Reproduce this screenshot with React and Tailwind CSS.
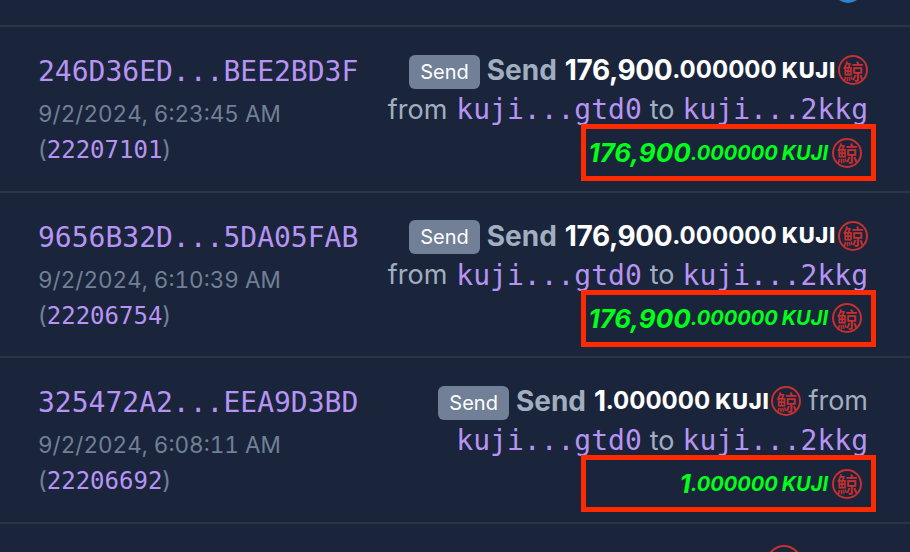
import React from 'react';

const rows = [
    { hash: '246D36ED...BEE2BD3F', date: '9/2/2024, 6:23:45 AM', height: '22207101', whole: '176,900', big: true },
    { hash: '9656B32D...5DA05FAB', date: '9/2/2024, 6:10:39 AM', height: '22206754', whole: '176,900', big: true },
    { hash: '325472A2...EEA9D3BD', date: '9/2/2024, 6:08:11 AM', height: '22206692', whole: '1', big: false },
];

const mono = 'font-["DejaVu_Sans_Mono",monospace] text-[28px] tracking-[0] text-[#b794f4]';

const Seal = ({ className = '' }) => (
    <span
        className={`inline-flex h-[30px] w-[30px] shrink-0 items-center justify-center rounded-full border-2 border-[#c53030] font-["Noto_Sans_CJK_SC",sans-serif] text-[21px] leading-none font-medium not-italic text-[#c53030] ${className}`}
    >
        鯨
    </span>
);

const Amount = ({ whole }) => (
    <span className="inline-flex items-center text-white">
        <span className="text-[28px] font-bold tracking-[-0.4px]">{whole}</span>
        <span className="text-[24px] font-bold">.000000</span>
        <span className="ml-[5px] text-[22px] font-extrabold tracking-[0.7px]">KUJI</span>
        <Seal className="ml-[2px]" />
    </span>
);

const Row = ({ hash, date, height, whole, big }) => (
    <div className="flex h-[165.5px] justify-between border-b-2 border-[#2a3548] pr-[42px] pl-[38px]">
        <div className="flex flex-col pt-[21px]">
            <div className={`${mono} h-[48px] leading-[48px]`}>{hash}</div>
            <div className="h-[36px] text-[22.5px] leading-[36px] text-[#718096] tabular-nums">{date}</div>
            <div className="h-[36px] text-[24px] leading-[36px] text-[#718096]">
                (<span className="font-['DejaVu_Sans_Mono',monospace] text-[#b794f4]">{height}</span>)
            </div>
        </div>
        <div className="flex flex-col items-end pt-[23px]">
            <div className="flex h-[40px] items-center">
                <span className="mt-[3px] mr-[7px] flex h-[34px] items-center rounded-[6px] bg-[#718096] px-[11px] text-[20px] text-white">Send</span>
                <span className="mr-[8px] text-[28px] font-bold text-[#a0aec0]">Send</span>
                <Amount whole={whole} />
                {!big && <span className="ml-[7px] text-[27px] text-[#a0aec0]">from</span>}
            </div>
            <div className="flex h-[40px] items-center text-[27px] text-[#a0aec0]">
                {big && <span className="mr-[9px]">from</span>}
                <span className={mono}>kuji...gtd0</span>
                <span className="mx-[8px]">to</span>
                <span className={mono}>kuji...2kkg</span>
            </div>
            <div className="-mt-[6px] -mr-[8px] flex h-[57px] w-[295px] items-center justify-end border-[5px] border-[#ff2a00] pr-[9px] italic text-[#00ff19]">
                <span className="text-[26px] font-bold">{whole}</span>
                <span className="text-[20px] font-bold">.000000</span>
                <span className="ml-[4px] text-[20px] font-bold">KUJI</span>
                <Seal className="ml-[4px]" />
            </div>
        </div>
    </div>
);

const App = () => {
    return (
        <div className="h-[552px] w-[910px] overflow-hidden bg-[#1a253b] font-['Inter',sans-serif]">
            <div className="flex h-[27px] justify-end overflow-hidden border-b-2 border-[#2a3548] pr-[47px]">
                <span className="-mt-[27px] h-[30px] w-[30px] rounded-full bg-[#3182ce]"></span>
            </div>
            {rows.map((row) => (
                <Row key={row.hash} {...row} />
            ))}
            <div className="flex justify-end pr-[42px]">
                <div className="flex items-start">
                    <span className="mt-[28px] mr-[152px] h-[34px] w-[183px] rounded-[6px] bg-[#a0aec0]"></span>
                    <span className="mt-[21px] h-[36px] w-[36px] rounded-full border-2 border-[#c53030]"></span>
                    <span className="w-[66px]"></span>
                </div>
            </div>
        </div>
    );
};

export default App;
